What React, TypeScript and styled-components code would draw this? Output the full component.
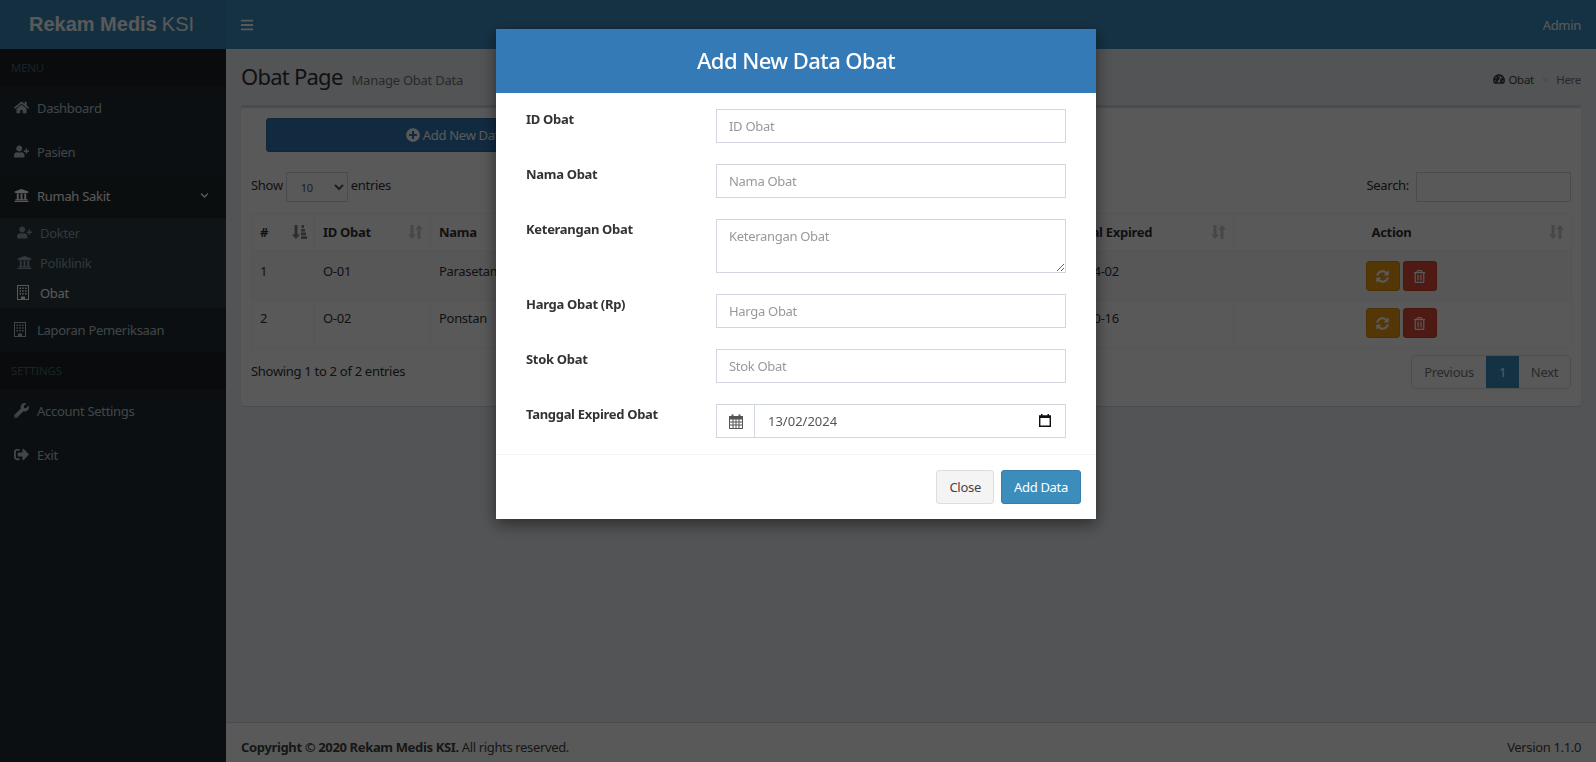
import React from 'react';
import styled, { createGlobalStyle } from 'styled-components';
import {
  FaBars,
  FaChevronDown,
  FaHome,
  FaPlusCircle,
  FaRegTrashAlt,
  FaSignOutAlt,
  FaSyncAlt,
  FaTachometerAlt,
  FaUniversity,
  FaUserPlus,
  FaWrench,
} from 'react-icons/fa';

const GlobalStyle = createGlobalStyle`
  * { box-sizing: border-box; }
  html, body { margin: 0; height: 100%; overflow: hidden; }
  body {
    font-family: "Noto Sans", "Open Sans", sans-serif;
    font-size: 13px;
    letter-spacing: -0.3px;
    color: #333;
    background: #ecf0f5;
  }
  input, textarea, select, button { font-family: inherit; letter-spacing: inherit; }
`;

const Page = styled.div`
  display: grid;
  grid-template-columns: 226px 1fr;
  grid-template-rows: 49px 1fr;
  height: 762px;
`;

const Logo = styled.div`
  display: flex;
  align-items: center;
  justify-content: center;
  padding-right: 3px;
  background: #3a87b8;
  color: #fff;
  font-family: "Liberation Sans", Arial, sans-serif;
  font-size: 20px;
  letter-spacing: 0;
  font-weight: 300;
  b { font-weight: 700; margin-right: 5px; }
`;

const TopNav = styled.div`
  display: flex;
  align-items: center;
  justify-content: space-between;
  padding: 0 15px 0 14px;
  background: #3d8fc4;
  color: #fff;
`;

const Sidebar = styled.aside`
  background: #222d32;
  color: #b8c7ce;
`;

const MenuHeader = styled.div`
  height: 37px;
  padding-left: 11px;
  display: flex;
  align-items: center;
  background: #1a2226;
  color: #4b646f;
  font-size: 11.5px;
`;

const MenuItem = styled.div<{ $active?: boolean }>`
  height: 44px;
  display: flex;
  align-items: center;
  padding: 0 14px 1px;
  background: ${({ $active }) => ($active ? '#1e282c' : 'transparent')};
  color: ${({ $active }) => ($active ? '#fff' : '#b8c7ce')};
`;

const MenuIcon = styled.span`
  width: 23px;
  flex: none;
  display: flex;
  align-items: center;
  svg { height: 15px; width: auto; }
`;

const Chevron = styled(FaChevronDown)`
  margin-left: auto;
  margin-right: 3px;
  width: 9px;
  height: 9px;
`;

const SubMenu = styled.div`
  background: #2c3b41;
`;

const SubItem = styled.div<{ $active?: boolean }>`
  height: 30px;
  display: flex;
  align-items: center;
  padding: 0 0 1px 17px;
  color: ${({ $active }) => ($active ? '#fff' : '#8aa4af')};
`;

const SubIcon = styled.span`
  width: 23px;
  flex: none;
  display: flex;
  align-items: center;
  svg { height: 15px; width: auto; }
`;

const Main = styled.main`
  display: flex;
  flex-direction: column;
  min-width: 0;
`;

const Content = styled.section`
  flex: 1;
  padding: 12px 15px 0;
`;

const TitleRow = styled.div`
  display: flex;
  align-items: baseline;
  justify-content: space-between;
  height: 44px;
`;

const PageTitle = styled.h1`
  margin: 0;
  font-size: 22px;
  font-weight: 400;
  letter-spacing: -0.75px;
  small {
    font-size: 13px;
    color: #777;
    margin-left: 9px;
    letter-spacing: -0.25px;
  }
`;

const Breadcrumb = styled.div`
  display: flex;
  align-items: center;
  gap: 3px;
  font-size: 11.5px;
  color: #444;
  svg { width: 12px; height: 12px; }
  span { color: #ccc; margin: 0 5px; }
  em { font-style: normal; color: #777; }
`;

const Box = styled.div`
  height: 301px;
  background: #fff;
  border-top: 3px solid #d2d6de;
  border-radius: 3px;
  box-shadow: 0 1px 1px rgba(0, 0, 0, 0.1);
  padding: 10px;
`;

const AddButton = styled.div`
  width: 380px;
  height: 34px;
  margin-left: 15px;
  display: flex;
  align-items: center;
  justify-content: center;
  gap: 3px;
  background: #337ab7;
  border: 1px solid #2e6da4;
  border-radius: 3px;
  color: #fff;
  svg { width: 14px; height: 14px; }
`;

const TableControls = styled.div`
  display: flex;
  justify-content: space-between;
  align-items: center;
  margin-top: 20px;
  height: 30px;
`;

const Inline = styled.label`
  display: flex;
  align-items: flex-start;
  gap: 3px;
  line-height: 26px;
`;

const SmallSelect = styled.select`
  width: 62px;
  height: 30px;
  padding: 5px 10px;
  font-size: 11px;
  background: #fff;
  border: 1px solid #d2d6de;
  color: #555;
`;

const SmallInput = styled.input`
  width: 155px;
  height: 30px;
  border: 1px solid #d2d6de;
  margin-left: 4px;
`;

const Table = styled.table`
  width: 100%;
  margin-top: 11px;
  border-collapse: collapse;
  table-layout: fixed;
  th, td {
    border: 1px solid #f4f4f4;
    padding: 8px;
    text-align: left;
    vertical-align: top;
    overflow: hidden;
    white-space: nowrap;
  }
  th { height: 37px; padding-top: 9px; position: relative; }
  tbody tr:nth-child(odd) { background: #f9f9f9; }
  td { height: 47px; }
  tbody tr:first-child td { height: 50px; padding-top: 11px; }
`;

const ActionTh = styled.th`
  text-align: center !important;
  padding-right: 30px !important;
`;

const ActionTd = styled.td`
  text-align: center !important;
  padding: 0 8px !important;
`;

const SortIcon = styled.svg<{ $strong?: boolean }>`
  position: absolute;
  right: 7px;
  top: 10px;
  width: 15px;
  height: 16px;
  color: #333;
  opacity: ${({ $strong }) => ($strong ? 0.6 : 0.25)};
`;

const ActionBtn = styled.span<{ $bg: string; $border: string; $top: number }>`
  display: inline-flex;
  align-items: center;
  justify-content: center;
  width: 34px;
  height: 30px;
  margin-right: 3px;
  margin-top: ${({ $top }) => $top}px;
  background: ${({ $bg }) => $bg};
  border: 1px solid ${({ $border }) => $border};
  border-radius: 3px;
  color: #fff;
  svg { width: 13px; height: 13px; }
`;

const TableFoot = styled.div`
  display: flex;
  justify-content: space-between;
  margin-top: 7px;
`;

const ShowingText = styled.div`
  padding-top: 7px;
`;

const Pagination = styled.div`
  display: flex;
  height: 34px;
  border: 1px solid #ddd;
  border-radius: 4px;
  color: #777;
`;

const PageLink = styled.span<{ $w: number; $current?: boolean }>`
  width: ${({ $w }) => $w}px;
  display: flex;
  align-items: center;
  justify-content: center;
  background: ${({ $current }) => ($current ? '#3d8fc4' : 'transparent')};
  color: ${({ $current }) => ($current ? '#fff' : '#777')};
`;

const Footer = styled.footer`
  height: 40px;
  padding: 15px 15px 0;
  display: flex;
  justify-content: space-between;
  background: #fff;
  border-top: 1px solid #d2d6de;
  color: #444;
  letter-spacing: -0.35px;
`;

const Backdrop = styled.div`
  position: fixed;
  inset: 0;
  padding-right: 4px;
  background: rgba(0, 0, 0, 0.65);
`;

const Modal = styled.div`
  width: 600px;
  margin: 29px auto 0;
  background: #fff;
  box-shadow: 0 5px 15px rgba(0, 0, 0, 0.5);
`;

const ModalHeader = styled.div`
  height: 64px;
  display: flex;
  align-items: center;
  justify-content: center;
  padding-bottom: 2px;
  background: #337ab7;
  color: #fff;
  font-size: 22px;
  font-weight: 500;
  letter-spacing: -0.55px;
`;

const ModalBody = styled.div`
  display: flex;
  flex-direction: column;
  gap: 21px;
  padding: 16px 30px;
`;

const FormRow = styled.div`
  display: grid;
  grid-template-columns: 190px 350px;
  font-weight: 700;
  color: #333;
`;

const FieldLabel = styled.label`
  padding-top: 1px;
`;

const TextInput = styled.input`
  height: 34px;
  padding: 6px 12px;
  border: 1px solid #d2d6de;
  border-radius: 0;
  font-size: 13px;
  font-weight: 400;
  &::placeholder { color: #999; opacity: 1; }
`;

const TextArea = styled.textarea`
  height: 54px;
  padding: 7px 12px;
  border: 1px solid #d2d6de;
  border-radius: 0;
  font-size: 13px;
  font-weight: 400;
  &::placeholder { color: #999; opacity: 1; }
`;

const DateGroup = styled.div`
  display: flex;
  height: 34px;
  border: 1px solid #d2d6de;
  font-weight: 400;
  color: #555;
`;

const DateAddon = styled.div`
  width: 38px;
  display: flex;
  align-items: center;
  justify-content: center;
  border-right: 1px solid #d2d6de;
  color: #555;
`;

const DateValue = styled.div`
  flex: 1;
  display: flex;
  align-items: center;
  justify-content: space-between;
  padding: 0 14px 1px 13px;
  letter-spacing: 0;
`;

const ModalFooter = styled.div`
  display: flex;
  justify-content: flex-end;
  gap: 7px;
  padding: 15px;
  border-top: 1px solid #f4f4f4;
`;

const FooterButton = styled.button<{ $primary?: boolean }>`
  height: 34px;
  padding: 0 12px;
  font-size: 13px;
  border-radius: 3px;
  border: 1px solid ${({ $primary }) => ($primary ? '#367fa9' : '#ddd')};
  background: ${({ $primary }) => ($primary ? '#3c8dbc' : '#f4f4f4')};
  color: ${({ $primary }) => ($primary ? '#fff' : '#444')};
`;

function SortBoth() {
  return (
    <SortIcon viewBox="0 0 15 16" fill="currentColor">
      <path d="M2.5 1h3v9.5H8L4 15 0 10.5h2.5zM9.5 15V5.5H7L11 1l4 4.5h-2.5V15z" />
    </SortIcon>
  );
}

function SortAsc() {
  return (
    <SortIcon viewBox="0 0 15 16" fill="currentColor" $strong>
      <path d="M2.5 1h3v9.5H8L4 15 0 10.5h2.5z" />
      <path d="M9.5 1h2.5v3H9.5zM9 5h4v2.6H9zM9 8.6h5v2.6H9zM9 12.2h6V15H9z" />
    </SortIcon>
  );
}

// fa-building-o, the package only has the wider FA5 shape
function BuildingIcon() {
  return (
    <svg viewBox="0 0 12 15" fill="currentColor">
      <path fillRule="evenodd" d="M0 0h12v15H0zM1 1v13h3v-2.5h4V14h3V1z" />
      <path d="M2.5 2.5h1.5V4H2.5zM5.2 2.5h1.5V4H5.2zM8 2.5h1.5V4H8zM2.5 5.2h1.5v1.5H2.5zM5.2 5.2h1.5v1.5H5.2zM8 5.2h1.5v1.5H8zM2.5 8h1.5v1.5H2.5zM5.2 8h1.5v1.5H5.2zM8 8h1.5v1.5H8z" />
    </svg>
  );
}

// fa-calendar with the grid, for the input group addon
function CalendarGrid() {
  return (
    <svg width="14" height="15" viewBox="0 0 14 15" fill="currentColor">
      <path fillRule="evenodd" d="M0 2h2.5V0.5h2V2h5V0.5h2V2H14v13H0zM1 5.5v2h2.5v-2zM4.5 5.5v2h2v-2zM7.5 5.5v2h2v-2zM10.5 5.5v2H13v-2zM1 8.5v2h2.5v-2zM4.5 8.5v2h2v-2zM7.5 8.5v2h2v-2zM10.5 8.5v2H13v-2zM1 11.5V14h2.5v-2.5zM4.5 11.5V14h2v-2.5zM7.5 11.5V14h2v-2.5zM10.5 11.5V14H13v-2.5z" />
    </svg>
  );
}

// the browser's own date picker indicator
function PickerIcon() {
  return (
    <svg width="12" height="13" viewBox="0 0 12 13" fill="#111">
      <path fillRule="evenodd" d="M2 0h1.5v1.2h5V0H10v1.2h2V13H0V1.2h2zM1.4 4v7.6h9.2V4z" />
    </svg>
  );
}

const rows = [
  { no: 1, id: 'O-01', nama: 'Parasetamol', ket: 'Obat penurun panas', harga: '5000', stok: '100', exp: '2024-04-02', top: 10 },
  { no: 2, id: 'O-02', nama: 'Ponstan', ket: 'Obat pereda nyeri', harga: '8000', stok: '50', exp: '2024-10-16', top: 7 },
];

export default function App() {
  return (
    <>
      <GlobalStyle />
      <Page>
        <Logo>
          <b>Rekam Medis</b> KSI
        </Logo>
        <TopNav>
          <FaBars size={14} />
          <span>Admin</span>
        </TopNav>
        <Sidebar>
          <MenuHeader>MENU</MenuHeader>
          <MenuItem><MenuIcon><FaHome /></MenuIcon>Dashboard</MenuItem>
          <MenuItem><MenuIcon><FaUserPlus /></MenuIcon>Pasien</MenuItem>
          <MenuItem $active><MenuIcon><FaUniversity /></MenuIcon>Rumah Sakit<Chevron /></MenuItem>
          <SubMenu>
            <SubItem><SubIcon><FaUserPlus /></SubIcon>Dokter</SubItem>
            <SubItem><SubIcon><FaUniversity /></SubIcon>Poliklinik</SubItem>
            <SubItem $active><SubIcon><BuildingIcon /></SubIcon>Obat</SubItem>
          </SubMenu>
          <MenuItem><MenuIcon><BuildingIcon /></MenuIcon>Laporan Pemeriksaan</MenuItem>
          <MenuHeader>SETTINGS</MenuHeader>
          <MenuItem><MenuIcon><FaWrench /></MenuIcon>Account Settings</MenuItem>
          <MenuItem><MenuIcon><FaSignOutAlt /></MenuIcon>Exit</MenuItem>
        </Sidebar>
        <Main>
          <Content>
            <TitleRow>
              <PageTitle>Obat Page<small>Manage Obat Data</small></PageTitle>
              <Breadcrumb>
                <FaTachometerAlt />Obat<span>&gt;</span><em>Here</em>
              </Breadcrumb>
            </TitleRow>
            <Box>
              <AddButton><FaPlusCircle />Add New Data</AddButton>
              <TableControls>
                <Inline>
                  Show
                  <SmallSelect defaultValue="10">
                    <option value="10">10</option>
                    <option value="25">25</option>
                  </SmallSelect>
                  entries
                </Inline>
                <Inline>Search:<SmallInput /></Inline>
              </TableControls>
              <Table>
                <colgroup>
                  <col width="63" />
                  <col width="116" />
                  <col width="200" />
                  <col width="240" />
                  <col width="100" />
                  <col width="75" />
                  <col width="188" />
                  <col width="338" />
                </colgroup>
                <thead>
                  <tr>
                    <th>#<SortAsc /></th>
                    <th>ID Obat<SortBoth /></th>
                    <th>Nama<SortBoth /></th>
                    <th>Keterangan<SortBoth /></th>
                    <th>Harga<SortBoth /></th>
                    <th>Stok<SortBoth /></th>
                    <th>Tanggal Expired<SortBoth /></th>
                    <ActionTh>Action<SortBoth /></ActionTh>
                  </tr>
                </thead>
                <tbody>
                  {rows.map((r) => (
                    <tr key={r.no}>
                      <td>{r.no}</td>
                      <td>{r.id}</td>
                      <td>{r.nama}</td>
                      <td>{r.ket}</td>
                      <td>{r.harga}</td>
                      <td>{r.stok}</td>
                      <td>{r.exp}</td>
                      <ActionTd>
                        <ActionBtn $bg="#f39c12" $border="#e08e0b" $top={r.top}><FaSyncAlt /></ActionBtn>
                        <ActionBtn $bg="#dd4b39" $border="#d73925" $top={r.top}><FaRegTrashAlt /></ActionBtn>
                      </ActionTd>
                    </tr>
                  ))}
                </tbody>
              </Table>
              <TableFoot>
                <ShowingText>Showing 1 to 2 of 2 entries</ShowingText>
                <Pagination>
                  <PageLink $w={74}>Previous</PageLink>
                  <PageLink $w={33} $current>1</PageLink>
                  <PageLink $w={51}>Next</PageLink>
                </Pagination>
              </TableFoot>
            </Box>
          </Content>
          <Footer>
            <span><b>Copyright © 2020 Rekam Medis KSI.</b> All rights reserved.</span>
            <span>Version 1.1.0</span>
          </Footer>
        </Main>
      </Page>
      <Backdrop>
        <Modal>
          <ModalHeader>Add New Data Obat</ModalHeader>
          <ModalBody>
            <FormRow><FieldLabel>ID Obat</FieldLabel><TextInput placeholder="ID Obat" /></FormRow>
            <FormRow><FieldLabel>Nama Obat</FieldLabel><TextInput placeholder="Nama Obat" /></FormRow>
            <FormRow><FieldLabel>Keterangan Obat</FieldLabel><TextArea placeholder="Keterangan Obat" /></FormRow>
            <FormRow><FieldLabel>Harga Obat (Rp)</FieldLabel><TextInput placeholder="Harga Obat" /></FormRow>
            <FormRow><FieldLabel>Stok Obat</FieldLabel><TextInput placeholder="Stok Obat" /></FormRow>
            <FormRow>
              <FieldLabel>Tanggal Expired Obat</FieldLabel>
              <DateGroup>
                <DateAddon><CalendarGrid /></DateAddon>
                <DateValue>13/02/2024<PickerIcon /></DateValue>
              </DateGroup>
            </FormRow>
          </ModalBody>
          <ModalFooter>
            <FooterButton>Close</FooterButton>
            <FooterButton $primary>Add Data</FooterButton>
          </ModalFooter>
        </Modal>
      </Backdrop>
    </>
  );
}
